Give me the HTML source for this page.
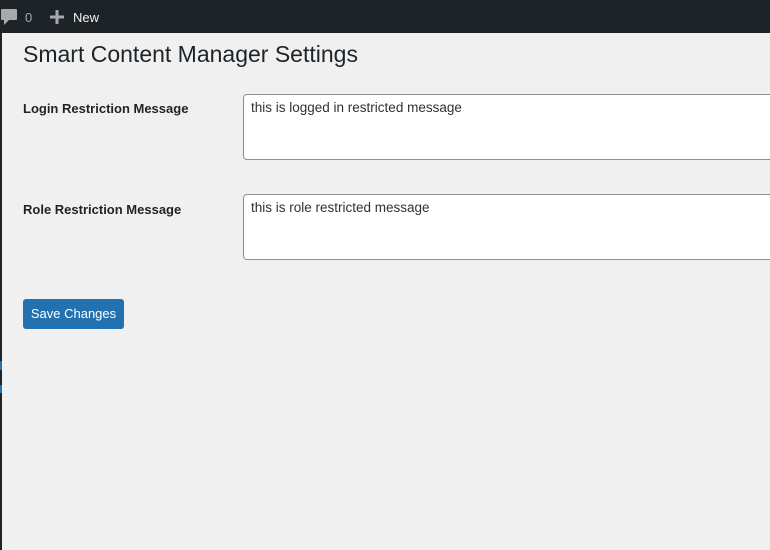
<!DOCTYPE html>
<html><head><style>
body{margin:0;width:770px;height:550px;background:#f0f0f1;font-family:"Liberation Sans",sans-serif;position:relative;overflow:hidden;color:#1d2327}
.bar{position:absolute;left:0;top:0;width:770px;height:33px;background:#1d2327}
.edge{position:absolute;left:0;top:33px;width:2px;height:517px;background:#1d2327}
h1{position:absolute;left:23px;top:41px;margin:0;font-size:23px;font-weight:400;color:#1d2327}
.lbl{position:absolute;left:23px;font-size:13px;font-weight:bold}
.ta{position:absolute;left:243px;width:540px;height:66px;border:1px solid #8c8f94;border-radius:4px;background:#fff;box-sizing:border-box;padding:5px 7px;font-size:13.5px;color:#2c3338}
.btn{position:absolute;left:23px;top:299px;width:101px;height:30px;background:#2271b1;border-radius:3px;color:#fff;font-size:13px;line-height:30px;text-align:center}
</style></head><body>
<div class="bar">
<svg style="position:absolute;left:0px;top:8px" width="18" height="18" viewBox="0 0 18 18"><path d="M2 1h14a1 1 0 0 1 1 1v9a1 1 0 0 1-1 1H9l-5 5v-5H2a1 1 0 0 1-1-1V2a1 1 0 0 1 1-1z" fill="#a7aaad"/></svg>
<span style="position:absolute;left:25px;top:10px;font-size:13px;color:#a7aaad">0</span>
<svg style="position:absolute;left:50px;top:10px" width="14" height="14"><path d="M5.5 0h3v5.5H14v3H8.5V14h-3V8.5H0v-3h5.5z" fill="#a7aaad"/></svg>
<span style="position:absolute;left:73px;top:10px;font-size:13px;color:#f0f0f1">New</span>
</div>
<div class="edge"></div>
<div style="position:absolute;left:0;top:361px;width:2px;height:9px;background:#2271b1"></div>
<div style="position:absolute;left:0;top:385px;width:2px;height:8px;background:#2271b1"></div>
<h1>Smart Content Manager Settings</h1>
<div class="lbl" style="top:101px">Login Restriction Message</div>
<div class="ta" style="top:94px">this is logged in restricted message</div>
<div class="lbl" style="top:202px">Role Restriction Message</div>
<div class="ta" style="top:194px">this is role restricted message</div>
<div class="btn">Save Changes</div>
</body></html>
